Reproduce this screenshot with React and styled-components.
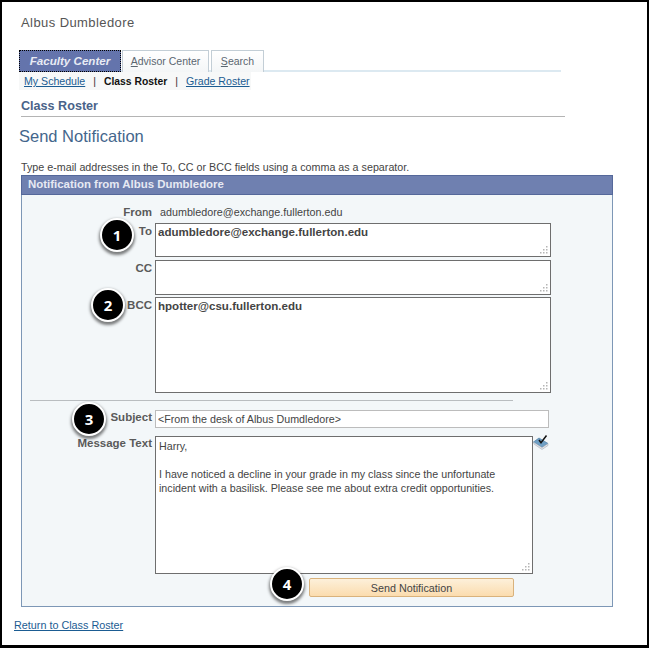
import React from 'react'
import styled, { createGlobalStyle } from 'styled-components'

const Global = createGlobalStyle`
  html, body { margin: 0; padding: 0; background: #fff; }
  body { font-family: "Liberation Sans", Arial, sans-serif; color: #444; }
`

const Frame = styled.div`
  position: relative;
  box-sizing: border-box;
  width: 649px;
  height: 648px;
  border: solid #000;
  border-width: 2px 2px 3px 2px;
  background: #fff;
  overflow: hidden;
  padding: 13px 0 0 17px;
`

const UserName = styled.div`
  font-size: 13px;
  line-height: 16px;
  letter-spacing: 0.42px;
  color: #555;
  padding-left: 2px;
`

const TabStrip = styled.div`
  display: flex;
  align-items: flex-end;
  width: 542px;
  height: 22px;
  margin-top: 19px;
  background: linear-gradient(to top, #dce9f1 2px, transparent 2px);
`

const Tab = styled.div`
  box-sizing: border-box;
  height: 22px;
  width: ${p => p.$w}px;
  margin-right: ${p => p.$gap}px;
  padding-bottom: 2px;
  display: flex;
  align-items: center;
  justify-content: center;
  font-size: ${p => (p.$active ? '11.6px' : '10.5px')};
  font-weight: ${p => (p.$active ? 'bold' : 'normal')};
  font-style: ${p => (p.$active ? 'italic' : 'normal')};
  color: ${p => (p.$active ? '#e8ebf4' : '#5a6670')};
  background: ${p => (p.$active ? '#6474ac' : 'linear-gradient(#fff, #f4f6f7)')};
  border: ${p => (p.$active ? '1px dotted #000' : '1px solid #c3ced6')};
  border-bottom: ${p => (p.$active ? '1px dotted #000' : '0')};
`

const SubNav = styled.div`
  box-sizing: border-box;
  width: 232px;
  height: 18px;
  display: flex;
  align-items: center;
  gap: 8px;
  padding-left: 5px;
  white-space: nowrap;
  background: #f7f8f8;
  font-size: 10.5px;
  color: #333;
`

const NavLink = styled.a`
  flex-shrink: 0;
  color: #1b5c92;
  text-decoration: underline;
  font-size: 10.6px;
`

const NavCurrent = styled.span`
  flex-shrink: 0;
  color: #111;
  font-weight: bold;
  font-size: 10.35px;
`

const SectionTitle = styled.div`
  box-sizing: border-box;
  width: 544px;
  margin: 7px 0 0 2px;
  height: 20px;
  border-bottom: 1px solid #b4b4b4;
  font-size: 12.6px;
  font-weight: bold;
  line-height: 18px;
  color: #4a6389;
`

const PageTitle = styled.div`
  margin-top: 9px;
  font-size: 16.5px;
  line-height: 20px;
  color: #44668c;
`

const Hint = styled.div`
  margin: 15px 0 0 2px;
  font-size: 10.73px;
  line-height: 13px;
  color: #444;
`

const Panel = styled.div`
  box-sizing: border-box;
  width: 592px;
  height: 432px;
  margin: 1px 0 0 2px;
  border: 1px solid #7d97b6;
  border-top: 0;
  background: #f3f7f9;
`

const PanelHeader = styled.div`
  box-sizing: border-box;
  height: 20px;
  margin: 0 -1px;
  padding-left: 6px;
  background: #6f80b0;
  border: 1px solid #55689a;
  font-size: 11.45px;
  font-weight: bold;
  line-height: 17px;
  color: #e6e9f3;
`

const Form = styled.div`
  display: grid;
  grid-template-columns: 130px auto;
  column-gap: 3px;
  padding: 11px 0 0 0;
  justify-content: start;
`

const FieldLabel = styled.div`
  font-size: 11.5px;
  font-weight: bold;
  line-height: 13px;
  text-align: right;
  color: #5a5a5a;
  margin-top: ${p => p.$top || 0}px;
`

const FromValue = styled.div`
  font-size: 10.75px;
  line-height: 13px;
  color: #444;
  padding-left: 5px;
  margin-bottom: 4px;
`

const BoxWrap = styled.div`
  position: relative;
  width: ${p => p.$w}px;
  height: ${p => p.$h}px;
  margin-bottom: ${p => p.$mb || 0}px;
`

const TextBox = styled.textarea`
  display: block;
  box-sizing: border-box;
  width: 100%;
  height: 100%;
  padding: 2px ${p => (p.$bold ? 2 : 3)}px;
  margin: 0;
  border: 1px solid #6e6e6e;
  border-radius: 0;
  outline: 0;
  resize: none;
  overflow: hidden;
  background: #fff;
  font-family: "Liberation Sans", Arial, sans-serif;
  font-size: ${p => (p.$bold ? '11.55px' : '10.7px')};
  font-weight: ${p => (p.$bold ? 'bold' : 'normal')};
  line-height: ${p => (p.$bold ? '13px' : '14px')};
  color: #444;
`

const SubjectInput = styled.input`
  display: block;
  box-sizing: border-box;
  width: 394px;
  height: 18px;
  margin: 0 0 8px;
  padding: 0 2px;
  border: 1px solid #bcbcbc;
  border-radius: 0;
  outline: 0;
  background: #fff;
  font-family: "Liberation Sans", Arial, sans-serif;
  font-size: 10.7px;
  color: #444;
`

const Grip = styled.svg`
  position: absolute;
  right: 3px;
  bottom: 3px;
  width: 9px;
  height: 9px;
`

const Divider = styled.div`
  grid-column: 1 / 3;
  width: 483px;
  height: 1px;
  margin: 7px 0 9px 8px;
  background: #b9bdc0;
`

const MessageRow = styled.div`
  display: flex;
  align-items: flex-start;
  margin-bottom: 4px;
`

const SpellIcon = styled.svg`
  width: 16px;
  height: 16px;
  margin: -2px 0 0 0;
`

const SendRow = styled.div`
  padding-left: 287px;
`

const SendButton = styled.button`
  display: block;
  box-sizing: border-box;
  width: 205px;
  height: 19px;
  padding: 0;
  border: 1px solid #d9b27c;
  border-radius: 2px;
  background: linear-gradient(#fdf0da, #fbdcae);
  font-family: "Liberation Sans", Arial, sans-serif;
  font-size: 10.75px;
  color: #444;
`

const ReturnLink = styled.a`
  display: block;
  margin: 12px 0 0 -5px;
  font-size: 10.8px;
  line-height: 13px;
  color: #1b5c92;
  text-decoration: underline;
`

const Badge = styled.div`
  position: absolute;
  left: ${p => p.$x - 2 - 17}px;
  top: ${p => p.$y - 2 - 17}px;
  width: 34px;
  height: 34px;
  box-sizing: border-box;
  border-radius: 50%;
  background: #000;
  border: 2px solid #fff;
  box-shadow: 0 2px 3px 1px rgba(0, 0, 0, 0.5);
  display: flex;
  align-items: center;
  justify-content: center;
  font-family: "Open Sans", "Liberation Sans", sans-serif;
  font-size: 15px;
  font-weight: bold;
  color: #fff;
`

const message = `Harry,

I have noticed a decline in your grade in my class since the unfortunate
incident with a basilisk. Please see me about extra credit opportunities.`

function ResizeGrip() {
  return (
    <Grip viewBox="0 0 9 9">
      <g fill="#b5b5b5">
        <rect x="7" y="1" width="1.5" height="1.5" />
        <rect x="4" y="4" width="1.5" height="1.5" />
        <rect x="7" y="4" width="1.5" height="1.5" />
        <rect x="1" y="7" width="1.5" height="1.5" />
        <rect x="4" y="7" width="1.5" height="1.5" />
        <rect x="7" y="7" width="1.5" height="1.5" />
      </g>
    </Grip>
  )
}

function Field({ w, h, mb, bold, value }) {
  return (
    <BoxWrap $w={w} $h={h} $mb={mb}>
      <TextBox $bold={bold} readOnly value={value || ''} />
      <ResizeGrip />
    </BoxWrap>
  )
}

export default function App() {
  return (
    <Frame>
      <Global />
      <UserName>Albus Dumbledore</UserName>
      <TabStrip>
        <Tab $active $w={102} $gap={1}>Faculty Center</Tab>
        <Tab $w={87} $gap={2}><span><u>A</u>dvisor Center</span></Tab>
        <Tab $w={53} $gap={0}><span><u>S</u>earch</span></Tab>
      </TabStrip>
      <SubNav>
        <NavLink>My Schedule</NavLink>
        <span>|</span>
        <NavCurrent>Class Roster</NavCurrent>
        <span>|</span>
        <NavLink>Grade Roster</NavLink>
      </SubNav>
      <SectionTitle>Class Roster</SectionTitle>
      <PageTitle>Send Notification</PageTitle>
      <Hint>Type e-mail addresses in the To, CC or BCC fields using a comma as a separator.</Hint>
      <Panel>
        <PanelHeader>Notification from Albus Dumbledore</PanelHeader>
        <Form>
          <FieldLabel>From</FieldLabel>
          <FromValue>adumbledore@exchange.fullerton.edu</FromValue>
          <FieldLabel $top={2}>To</FieldLabel>
          <Field w={396} h={34} mb={3} bold value="adumbledore@exchange.fullerton.edu" />
          <FieldLabel $top={2}>CC</FieldLabel>
          <Field w={396} h={35} mb={2} />
          <FieldLabel $top={2}>BCC</FieldLabel>
          <Field w={396} h={96} bold value="hpotter@csu.fullerton.edu" />
          <Divider />
          <FieldLabel $top={1}>Subject</FieldLabel>
          <SubjectInput readOnly value="<From the desk of Albus Dumdledore>" />
          <FieldLabel $top={1}>Message Text</FieldLabel>
          <MessageRow>
            <Field w={378} h={138} value={message} />
            <SpellIcon viewBox="0 0 16 16">
              <path d="M0.5 8 L6 4 L15 9.5 L9 13.5 Z" fill="#6f9fc4" stroke="#4c7da3" strokeWidth="0.7" />
              <path d="M0.5 8 L1 10 L9 15.5 L15 11.5 L15 9.5 L9 13.5 Z" fill="#e6e2e4" stroke="#8fa3b5" strokeWidth="0.5" />
              <path d="M6 6 L8 8.8 L13.5 1.5" fill="none" stroke="#111" strokeWidth="1.5" />
            </SpellIcon>
          </MessageRow>
        </Form>
        <SendRow>
          <SendButton>Send Notification</SendButton>
        </SendRow>
      </Panel>
      <ReturnLink>Return to Class Roster</ReturnLink>
      <Badge $x={117} $y={235}>1</Badge>
      <Badge $x={108} $y={305}>2</Badge>
      <Badge $x={89} $y={419}>3</Badge>
      <Badge $x={287} $y={584}>4</Badge>
    </Frame>
  )
}
